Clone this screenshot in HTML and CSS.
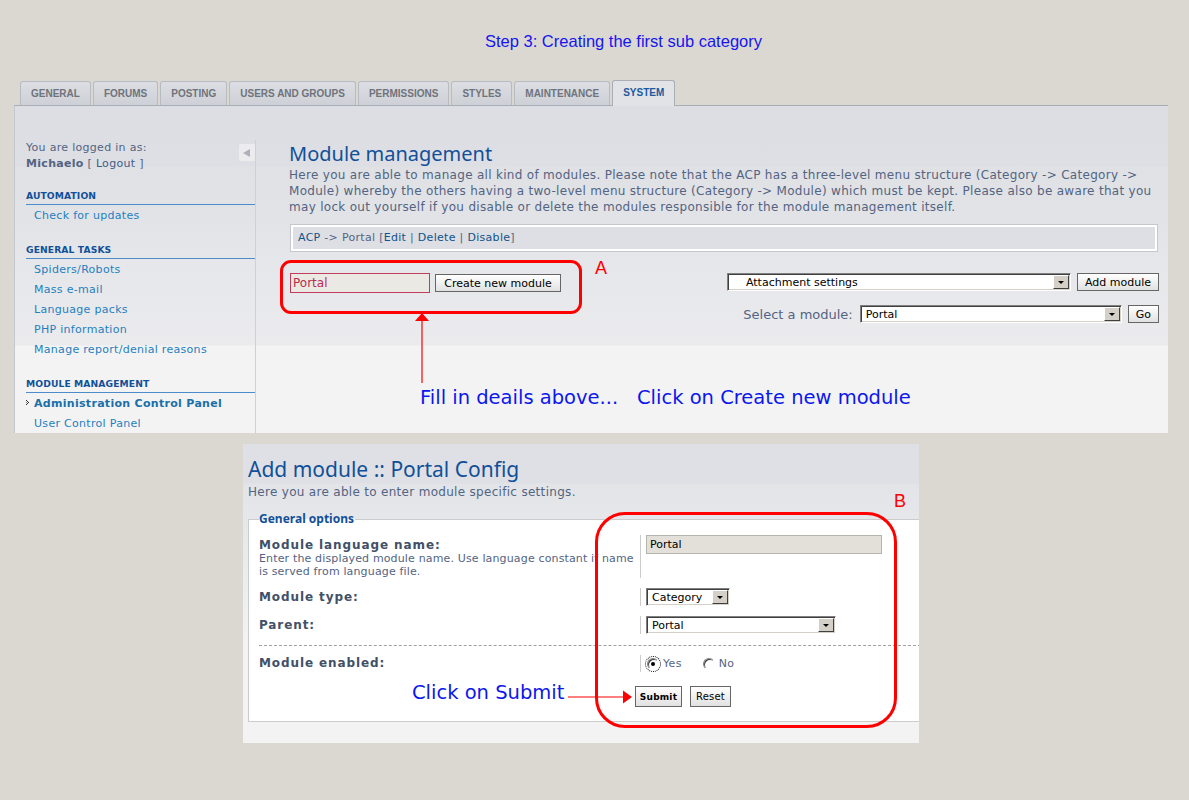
FILE: index.html
```html
<!DOCTYPE html>
<html>
<head>
<meta charset="utf-8">
<title>Module management</title>
<link rel="stylesheet" href="styles.css">
</head>
<body>
<div class="page">
  <div class="step-title">Step 3: Creating the first sub category</div>

  <div class="tabs">
    <div class="tab">GENERAL</div>
    <div class="tab">FORUMS</div>
    <div class="tab">POSTING</div>
    <div class="tab">USERS AND GROUPS</div>
    <div class="tab">PERMISSIONS</div>
    <div class="tab">STYLES</div>
    <div class="tab">MAINTENANCE</div>
    <div class="tab active">SYSTEM</div>
  </div>

  <div class="panel">
    <div class="sidebar">
      <div class="login-row">
        <p class="login">You are logged in as:<br><b>Michaelo</b> [ <a class="logout">Logout</a> ]</p>
        <span class="collapse"><span class="collapse-tri"></span></span>
      </div>
      <h3 class="menu-head">AUTOMATION</h3>
      <ul class="menu">
        <li><a>Check for updates</a></li>
      </ul>
      <h3 class="menu-head">GENERAL TASKS</h3>
      <ul class="menu">
        <li><a>Spiders/Robots</a></li>
        <li><a>Mass e-mail</a></li>
        <li><a>Language packs</a></li>
        <li><a>PHP information</a></li>
        <li><a>Manage report/denial reasons</a></li>
      </ul>
      <h3 class="menu-head">MODULE MANAGEMENT</h3>
      <ul class="menu">
        <li class="active"><span class="marker"><svg width="8" height="7" viewBox="0 0 8 7"><rect x="0" y="0" width="1" height="1" fill="#333"/><rect x="1" y="1" width="1" height="1" fill="#333"/><rect x="2" y="2" width="1" height="1" fill="#333"/><rect x="1" y="3" width="1" height="1" fill="#333"/><rect x="0" y="4" width="1" height="1" fill="#333"/><rect x="0" y="2" width="1" height="1" fill="#888"/></svg></span><a>Administration Control Panel</a></li>
        <li><a>User Control Panel</a></li>
      </ul>
    </div>

    <div class="main">
      <h1 class="page-head">Module management</h1>
      <p class="intro">Here you are able to manage all kind of modules. Please note that the ACP has a three-level menu structure (Category -&gt; Category -&gt;<br>Module) whereby the others having a two-level menu structure (Category -&gt; Module) which must be kept. Please also be aware that you<br>may lock out yourself if you disable or delete the modules responsible for the module management itself.</p>
      <div class="crumb"><a>ACP</a> -&gt; Portal [<a>Edit</a> | <a>Delete</a> | <a>Disable</a>]</div>

      <div class="forms">
        <div class="create-form">
          <span class="text-input">Portal</span>
          <span class="btn create-btn">Create new module</span>
        </div>
        <div class="right-forms">
          <div class="form-row">
            <div class="select sel-attach"><span class="sel-val indent">Attachment settings</span><span class="sel-arrow"><span class="tri"></span></span></div>
            <span class="btn">Add module</span>
          </div>
          <div class="form-row second">
            <span class="sel-label">Select a module:</span>
            <div class="select sel-module"><span class="sel-val">Portal</span><span class="sel-arrow"><span class="tri"></span></span></div>
            <span class="btn">Go</span>
          </div>
        </div>
      </div>
    </div>
  </div>

  <div class="panel2">
    <h2 class="page-head2">Add module :: Portal Config</h2>
    <p class="desc2">Here you are able to enter module specific settings.</p>
    <fieldset class="options">
      <legend>General options</legend>
      <div class="opt first">
        <div class="opt-label top"><b>Module language name:</b><br>Enter the displayed module name. Use language constant if name<br>is served from language file.</div>
        <div class="opt-field"><span class="text-input2">Portal</span></div>
      </div>
      <div class="opt">
        <div class="opt-label"><b>Module type:</b></div>
        <div class="opt-field"><div class="select sel-type"><span class="sel-val">Category</span><span class="sel-arrow"><span class="tri"></span></span></div></div>
      </div>
      <div class="opt">
        <div class="opt-label"><b>Parent:</b></div>
        <div class="opt-field"><div class="select sel-parent"><span class="sel-val">Portal</span><span class="sel-arrow"><span class="tri"></span></span></div></div>
      </div>
      <div class="opt sep">
        <div class="opt-label"><b>Module enabled:</b></div>
        <div class="opt-field radios">
          <span class="radio-opt"><span class="radio checked focus"></span>Yes</span>
          <span class="radio-opt"><span class="radio"></span>No</span>
        </div>
      </div>
      <div class="submit-row">
        <span class="btn2 bold">Submit</span>
        <span class="btn2">Reset</span>
      </div>
    </fieldset>
  </div>

  <!-- annotations over the screenshot -->
  <div class="anno-box box-a"></div>
  <div class="anno-letter letter-a">A</div>
  <svg class="arrow-up" width="18" height="72" viewBox="0 0 18 72"><polygon points="9,1 2,9 16,9" fill="#ff0000"/><line x1="9" y1="8" x2="9" y2="71" stroke="#ff0000" stroke-width="1.2"/></svg>
  <div class="anno-text fill-text">Fill in deails above...</div>
  <div class="anno-text create-text">Click on Create new module</div>

  <div class="anno-box box-b"></div>
  <div class="anno-letter letter-b">B</div>
  <div class="anno-text submit-text">Click on Submit</div>
  <svg class="arrow-right" width="68" height="14" viewBox="0 0 68 14"><line x1="1" y1="7" x2="58" y2="7" stroke="#ff0000" stroke-width="1.2"/><polygon points="56,0.5 56,13.5 65,7" fill="#ff0000"/></svg>
</div>
</body>
</html>
```

FILE: styles.css
```css
body {
  margin: 0;
  background: #dbd8d1;
  font-family: "DejaVu Sans", Verdana, sans-serif;
  font-size: 11px;
  color: #536482;
}

.page {
  position: relative;
  width: 1189px;
  height: 800px;
  overflow: hidden;
}

.step-title {
  padding: 32px 0 0 485px;
  font-family: "Liberation Sans", Arial, sans-serif;
  font-size: 16.5px;
  line-height: 18px;
  color: #1515f0;
}

/* ---------- tabs ---------- */
.tabs {
  position: relative;
  z-index: 1;
  display: flex;
  align-items: flex-end;
  gap: 2px;
  height: 25px;
  margin-top: 30px;
  padding-left: 20px;
}

.tab {
  box-sizing: border-box;
  height: 24px;
  padding: 0 10px;
  border: 1px solid #b7bbc2;
  border-bottom: none;
  border-radius: 3px 3px 0 0;
  background: linear-gradient(#dcdee3, #cdd0d6);
  font-family: "Liberation Sans", Arial, sans-serif;
  font-weight: bold;
  font-size: 10px;
  line-height: 24px;
  color: #6f737b;
}

.tab.active {
  height: 26px;
  margin-bottom: -1px;
  border-color: #a9adb5;
  background: #e2e3e7;
  color: #1a5a9e;
}

/* ---------- main panel ---------- */
.panel {
  display: flex;
  box-sizing: border-box;
  width: 1154px;
  height: 328px;
  margin-left: 14px;
  padding-top: 34px;
  border-top: 1px solid #a9adb5;
  border-left: 1px solid #c4c7cd;
  overflow: hidden;
  background: linear-gradient(#dddee3 0, #dedfe4 60px, #dfe1e5 61px, #e2e3e7 110px, #e6e7ea 160px, #ebebee 239px, #f3f3f3 240px);
}

.sidebar {
  flex-shrink: 0;
  box-sizing: border-box;
  width: 241px;
  padding-left: 11px;
  border-right: 1px solid #cdd0d6;
  letter-spacing: 0.3px;
}

.login-row {
  display: flex;
  justify-content: space-between;
  align-items: flex-start;
}

.login {
  margin: 0;
  line-height: 16px;
}

.logout {
  color: #3f5d88;
}

.collapse {
  display: flex;
  align-items: center;
  justify-content: center;
  width: 16px;
  height: 17px;
  margin-top: 4px;
  background: #ececef;
  border-radius: 2px 0 0 2px;
}

.collapse-tri {
  width: 0;
  height: 0;
  border-top: 4px solid transparent;
  border-bottom: 4px solid transparent;
  border-right: 7px solid #adb0b6;
  margin-left: -2px;
}

.menu-head {
  margin: 18px 0 0;
  padding-bottom: 2px;
  border-bottom: 1px solid #4d8ccb;
  font-size: 9.2px;
  line-height: 12px;
  font-weight: bold;
  letter-spacing: 0.1px;
  color: #115098;
}

.menu {
  list-style: none;
  margin: 1px 0 0;
  padding: 0;
}

.menu li {
  padding-left: 8px;
  line-height: 20px;
}

.menu a {
  color: #1f80c0;
  text-decoration: none;
}

.menu li.active {
  padding-left: 0;
  font-weight: bold;
}

.menu li.active a {
  color: #1a6fa9;
}

.marker {
  display: inline-block;
  width: 8px;
}

/* ---------- content ---------- */
.main {
  flex: 1;
  padding: 0 10px 0 33px;
}

.page-head {
  margin: 2px 0 0;
  font-family: "Noto Sans", "DejaVu Sans", sans-serif;
  font-weight: normal;
  font-size: 20px;
  line-height: 24px;
  color: #115098;
}

.intro {
  margin: 1px 0 0;
  font-size: 12px;
  letter-spacing: 0.3px;
  line-height: 16px;
  white-space: nowrap;
}

.crumb {
  box-sizing: border-box;
  height: 28px;
  margin: 9px 0 0 1px;
  padding-left: 7px;
  border: 1px solid #c6c8cd;
  box-shadow: inset 0 0 0 2px #fff;
  background: #dedfe4;
  line-height: 26px;
  letter-spacing: 0.3px;
}

.crumb a {
  color: #105289;
}

.forms {
  display: flex;
  justify-content: space-between;
  margin-top: 21px;
}

.create-form {
  display: flex;
  align-items: flex-start;
  gap: 5px;
  margin-left: 1px;
}

.create-form .btn {
  margin-top: 1px;
}

.text-input {
  box-sizing: border-box;
  width: 140px;
  height: 20px;
  padding-left: 2px;
  border: 1px solid #c23c5b;
  background: #ebe9e4;
  color: #b82c4e;
  font-size: 12px;
  line-height: 18px;
}

.btn {
  display: inline-flex;
  align-items: center;
  justify-content: center;
  box-sizing: border-box;
  height: 18px;
  padding: 0 7px;
  border: 1px solid #666;
  background: linear-gradient(#ffffff, #e1e1e1);
  color: #000;
  font-size: 11px;
}

.create-btn {
  width: 126px;
}

.right-forms {
  display: flex;
  flex-direction: column;
  align-items: flex-end;
  margin-right: -1px;
}

.form-row {
  display: flex;
  align-items: center;
  gap: 6px;
}

.form-row.second {
  margin-top: 14px;
}

.sel-label {
  margin-right: 1px;
  font-size: 13px;
}

.select {
  display: flex;
  align-items: center;
  box-sizing: border-box;
  height: 18px;
  border: 1px solid;
  border-color: #808080 #ffffff #ffffff #808080;
  box-shadow: inset 1px 1px 0 #404040, inset -1px -1px 0 #d4d0c8;
  background: #fff;
  color: #000;
  font-size: 11px;
}

.sel-attach { width: 344px; }
.sel-module { width: 262px; }
.sel-type { width: 84px; }
.sel-parent { width: 190px; }

.sel-val {
  flex: 1;
  padding-left: 5px;
  white-space: nowrap;
}

.sel-val.indent {
  padding-left: 18px;
}

.sel-arrow {
  display: flex;
  align-items: center;
  justify-content: center;
  box-sizing: border-box;
  width: 16px;
  height: 14px;
  margin-right: 1px;
  border: 1px solid;
  border-color: #ffffff #404040 #404040 #ffffff;
  background: #d4d0c8;
}

.tri {
  width: 0;
  height: 0;
  border-left: 3px solid transparent;
  border-right: 3px solid transparent;
  border-top: 3px solid #000;
}

/* ---------- second panel ---------- */
.panel2 {
  box-sizing: border-box;
  width: 676px;
  height: 299px;
  margin: 11px 0 0 243px;
  padding: 12px 0 0 5px;
  overflow: hidden;
  background: linear-gradient(#dfe0e5 0, #dfe0e5 39px, #e2e4e8 40px, #e5e7ea 75px, #f3f3f3 200px);
}

.page-head2 {
  margin: 0;
  font-family: "Noto Sans", "DejaVu Sans", sans-serif;
  font-weight: normal;
  font-size: 21px;
  line-height: 26px;
  color: #115098;
}

.desc2 {
  margin: 2px 0 0;
  font-size: 12px;
  letter-spacing: 0.3px;
  line-height: 16px;
}

.options {
  margin: 12px -3px 0 0;
  padding: 4px 0 14px 10px;
  border: 1px solid #cccccc;
  background: #fff;
}

.options legend {
  padding: 0 1px 0 0;
  font-family: "Noto Sans", "DejaVu Sans", sans-serif;
  font-weight: bold;
  font-size: 12px;
  line-height: 14px;
  color: #115098;
}

.opt {
  display: flex;
  align-items: center;
  padding: 5px 0;
}

.opt.first {
  align-items: stretch;
}

.opt.sep {
  margin-top: 6px;
  padding-top: 9px;
  border-top: 1px dashed #a0a0a0;
}

.opt-label {
  flex-shrink: 0;
  width: 381px;
  line-height: 13px;
  letter-spacing: 0.15px;
  white-space: nowrap;
}

.opt-label b {
  color: #425067;
  font-size: 12px;
  letter-spacing: 0.9px;
}

.opt-label.top {
  padding-top: 4px;
}

.opt-field {
  display: flex;
  align-items: flex-start;
  padding-left: 5px;
  border-left: 1px solid #cccccc;
}

.text-input2 {
  box-sizing: border-box;
  width: 236px;
  height: 19px;
  padding-left: 3px;
  border: 1px solid #b5b3ae;
  background: #e3e0da;
  color: #000;
  font-size: 11px;
  line-height: 17px;
}

.radios {
  align-items: center;
  height: 17px;
  letter-spacing: 0.3px;
}

.radio-opt {
  display: inline-flex;
  align-items: center;
  gap: 4px;
  margin-right: 20px;
  margin-left: 1px;
}

.radio {
  position: relative;
  box-sizing: border-box;
  width: 12px;
  height: 12px;
  border: 1px solid;
  border-color: #808080 #ffffff #ffffff #808080;
  border-radius: 50%;
  background: #fff;
  box-shadow: inset 1px 1px 0 #404040;
}

.radio.checked::after {
  content: "";
  position: absolute;
  left: 3px;
  top: 3px;
  width: 4px;
  height: 4px;
  border-radius: 50%;
  background: #000;
}

.radio.focus {
  outline: 1px dotted #000;
  outline-offset: 1px;
}

.submit-row {
  display: flex;
  gap: 8px;
  margin: 9px 0 0 376px;
}

.btn2 {
  display: inline-flex;
  align-items: center;
  justify-content: center;
  box-sizing: border-box;
  height: 21px;
  padding: 0 5px;
  border: 1px solid #666;
  background: linear-gradient(#ffffff, #e1e1e1);
  color: #000;
  font-size: 10px;
  letter-spacing: 0.2px;
}

.btn2.bold {
  font-weight: bold;
  font-size: 9px;
  width: 47px;
}

/* ---------- annotations ---------- */
.anno-box {
  position: absolute;
  box-sizing: border-box;
  border: 3px solid #ff0000;
}

.box-a {
  left: 280px;
  top: 260px;
  width: 302px;
  height: 54px;
  border-radius: 11px;
}

.box-b {
  left: 595px;
  top: 512px;
  width: 302px;
  height: 216px;
  border-radius: 30px;
}

.anno-letter {
  position: absolute;
  font-family: "Liberation Sans", Arial, sans-serif;
  font-size: 18px;
  line-height: 20px;
  color: #ff0000;
}

.letter-a { left: 595px; top: 258px; }
.letter-b { left: 894px; top: 491px; }

.anno-text {
  position: absolute;
  font-family: "DejaVu Sans", sans-serif;
  font-size: 19.5px;
  line-height: 24px;
  color: #0c17ee;
  white-space: nowrap;
}

.fill-text { left: 420px; top: 386px; }
.create-text { left: 637px; top: 386px; }
.submit-text { left: 412px; top: 681px; }

.arrow-up {
  position: absolute;
  left: 413px;
  top: 312px;
}

.arrow-right {
  position: absolute;
  left: 567px;
  top: 690px;
}
```
